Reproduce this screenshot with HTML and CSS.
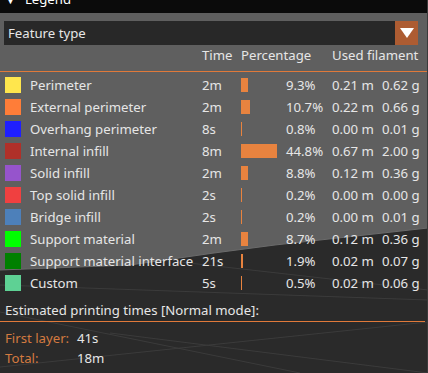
FILE: index.html
```html
<!DOCTYPE html>
<html lang="en">
<head>
  <meta charset="UTF-8">
  <title>Legend</title>
  <link rel="stylesheet" href="styles.css">
</head>
<body>

<!-- 3D scene behind the legend window -->
<svg class="scene" width="428" height="373" viewBox="0 0 428 373">
  <rect width="428" height="373" fill="#2a2a2a"/>
  <g stroke="#3b3b3b" stroke-width="1" fill="none">
    <line x1="0" y1="367" x2="428" y2="322"/>
    <line x1="110" y1="333" x2="428" y2="373"/>
    <line x1="0" y1="312" x2="300" y2="373"/>
    <line x1="0" y1="285" x2="428" y2="300"/>
    <line x1="180" y1="262" x2="428" y2="290"/>
  </g>
  <polygon points="0,0 428,0 428,228 275,245 214,253 130,265 0,270" fill="#5f5f5f"/>
  <polyline points="0,270 130,265 214,253 275,245 428,228" stroke="#6b6b6b" fill="none"/>
</svg>

<div class="legend">
  <div class="titlebar"><span class="title-text"><span class="arrow">▼</span>Legend</span></div>

  <div class="combo">
    <span class="combo-text">Feature type</span>
    <span class="combo-btn">
      <svg width="14" height="10" viewBox="0 0 14 10"><polygon points="0,0 14,0 7,10" fill="#ffffff"/></svg>
    </span>
  </div>

  <div class="stats">
    <div class="head">
      <span></span><span></span>
      <span>Time</span>
      <span class="span2">Percentage</span>
      <span class="span2">Used filament</span>
    </div>
    <div class="sep"></div>

    <div class="row"><i class="swatch" style="background:#ffe64d"></i><span>Perimeter</span><span>2m</span><b class="bar" style="width:7px"></b><span>9.3%</span><span>0.21 m</span><span>0.62 g</span></div>
    <div class="row"><i class="swatch" style="background:#ff7d38"></i><span>External perimeter</span><span>2m</span><b class="bar" style="width:9px"></b><span>10.7%</span><span>0.22 m</span><span>0.66 g</span></div>
    <div class="row"><i class="swatch" style="background:#1f1fff"></i><span>Overhang perimeter</span><span>8s</span><b class="bar" style="width:1px"></b><span>0.8%</span><span>0.00 m</span><span>0.01 g</span></div>
    <div class="row"><i class="swatch" style="background:#b03029"></i><span>Internal infill</span><span>8m</span><b class="bar" style="width:36px"></b><span>44.8%</span><span>0.67 m</span><span>2.00 g</span></div>
    <div class="row"><i class="swatch" style="background:#9654cc"></i><span>Solid infill</span><span>2m</span><b class="bar" style="width:7px"></b><span>8.8%</span><span>0.12 m</span><span>0.36 g</span></div>
    <div class="row"><i class="swatch" style="background:#f04040"></i><span>Top solid infill</span><span>2s</span><b class="bar" style="width:1px"></b><span>0.2%</span><span>0.00 m</span><span>0.00 g</span></div>
    <div class="row"><i class="swatch" style="background:#4d80ba"></i><span>Bridge infill</span><span>2s</span><b class="bar" style="width:1px"></b><span>0.2%</span><span>0.00 m</span><span>0.01 g</span></div>
    <div class="row"><i class="swatch" style="background:#00ff00"></i><span>Support material</span><span>2m</span><b class="bar" style="width:7px"></b><span>8.7%</span><span>0.12 m</span><span>0.36 g</span></div>
    <div class="row"><i class="swatch" style="background:#008000"></i><span>Support material interface</span><span>21s</span><b class="bar" style="width:2px"></b><span>1.9%</span><span>0.02 m</span><span>0.07 g</span></div>
    <div class="row"><i class="swatch" style="background:#5ed194"></i><span>Custom</span><span>5s</span><b class="bar" style="width:1px"></b><span>0.5%</span><span>0.02 m</span><span>0.06 g</span></div>
  </div>

  <div class="estimate">Estimated printing times [Normal mode]:</div>
  <div class="sep wide"></div>
  <div class="time-row"><span class="time-label">First layer:</span><span>41s</span></div>
  <div class="time-row"><span class="time-label">Total:</span><span>18m</span></div>
</div>

</body>
</html>
```

FILE: styles.css
```css
body {
  margin: 0;
  width: 428px;
  height: 373px;
  overflow: hidden;
  background: #2a2a2a;
  font-family: "Noto Sans", "Open Sans", sans-serif;
  font-size: 13.2px;
  color: #e6e6e6;
}

.scene {
  position: absolute;
  top: 0;
  left: 0;
  z-index: 0;
}

.legend {
  position: relative;
  z-index: 1;
  width: 427px;
  height: 373px;
  border-right: 1px solid #3a3a3a;
}

.titlebar {
  height: 13px;
  overflow: hidden;
  background: #0b0b0b;
  color: #ffffff;
  padding-left: 5px;
}

.title-text {
  display: block;
  line-height: 16px;
  margin-top: -9px;
}

.title-text .arrow {
  font-size: 11px;
  margin-right: 9px;
}

.combo {
  display: flex;
  align-items: center;
  justify-content: space-between;
  height: 24px;
  margin: 8px 9px 0 4px;
  background: #282828;
}

.combo-text {
  padding-left: 4px;
  line-height: 24px;
}

.combo-btn {
  display: flex;
  align-items: center;
  justify-content: center;
  width: 23px;
  height: 24px;
  background: #ad5c32;
}

.stats {
  display: grid;
  grid-template-columns: 30px 172px 39px 45px 46px 50px 1fr;
}

.head,
.row {
  display: contents;
}

.head span {
  line-height: 20px;
  height: 20px;
}

.head .span2 {
  grid-column: span 2;
}

.sep {
  grid-column: 1 / -1;
  height: 1px;
  background: #e0793a;
  margin: 6px 0 2px 0;
}

.row > * {
  height: 22px;
  line-height: 22px;
  white-space: nowrap;
}

.swatch {
  display: block;
  width: 16px;
  height: 16px !important;
  margin: 3px 0 3px 5px;
}

.bar {
  display: block;
  height: 14px !important;
  margin: 4px 0;
  background: #e8833f;
}

.estimate {
  margin-top: 6px;
  padding-left: 5px;
  line-height: 20px;
}

.sep.wide {
  margin: 1px 2px 6px 0;
}

.time-row {
  display: flex;
  line-height: 20px;
  padding-left: 5px;
}

.time-label {
  width: 72px;
  color: #d47a40;
}
```
